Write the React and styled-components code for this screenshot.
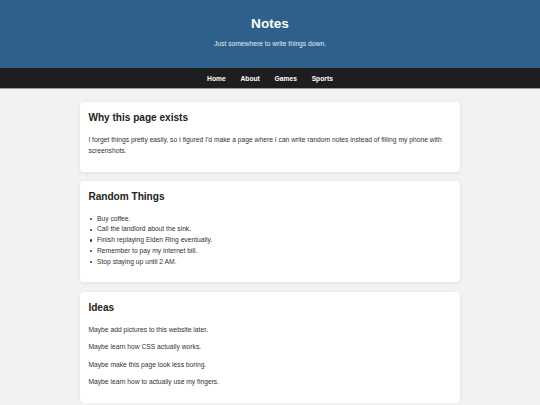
import React from "react";
import styled, { createGlobalStyle } from "styled-components";

const GlobalStyle = createGlobalStyle`
  html, body { margin: 0; padding: 0; }
  body {
    background: #f2f2f2;
    font-family: "Liberation Sans", Arial, sans-serif;
    font-size: 6.72px;
    line-height: 1.6;
    color: #333;
  }
`;

const Header = styled.header`
  background: #2f5f8b;
  color: #fff;
  text-align: center;
  padding: 15.8px 10px 18.3px;
`;

const Title = styled.h1`
  margin: 0 0 7px;
  font-size: 13.6px;
  line-height: 16px;
  font-weight: 700;
`;

const Tagline = styled.p`
  margin: 0;
  font-size: 6.72px;
  line-height: 10.75px;
  color: #e4ebf2;
`;

const Nav = styled.nav`
  background: #1e1e1e;
  height: 21.5px;
  box-sizing: border-box;
  padding-top: 3px;
  border-bottom: 1px solid #9a9a9a;
  display: flex;
  justify-content: center;
  align-items: center;
  gap: 14.7px;
`;

const NavLink = styled.a`
  color: #fff;
  font-weight: 700;
  font-size: 6.72px;
  text-decoration: none;
  line-height: 1;
`;

const Main = styled.main`
  width: 380px;
  margin: 0 auto;
  padding-top: 12.7px;
  display: flex;
  flex-direction: column;
  gap: 9.3px;
`;

const Card = styled.section`
  background: #fff;
  border-radius: 4px;
  box-shadow: 0 1px 4px rgba(0, 0, 0, 0.08);
  padding: 8.4px;
`;

const Heading = styled.h2`
  margin: 0 0 8.4px;
  font-size: 10.08px;
  line-height: 16.1px;
  font-weight: 700;
  color: #222;
`;

const Text = styled.p`
  margin: 0 0 6.72px;
`;

const List = styled.ul`
  margin: 0 0 6.72px;
  padding-left: 1.8px;
  list-style: none;
`;

const Item = styled.li`
  line-height: 10.72px;
  display: flex;
  align-items: center;

  &::before {
    content: "";
    width: 2.2px;
    height: 2.2px;
    border-radius: 50%;
    background: #333;
    margin-right: 4.6px;
    flex: none;
  }
`;

const things = [
  "Buy coffee.",
  "Call the landlord about the sink.",
  "Finish replaying Elden Ring eventually.",
  "Remember to pay my internet bill.",
  "Stop staying up until 2 AM.",
];

const ideas = [
  "Maybe add pictures to this website later.",
  "Maybe learn how CSS actually works.",
  "Maybe make this page look less boring.",
  "Maybe learn how to actually use my fingers.",
];

export default function App() {
  return (
    <>
      <GlobalStyle />
      <Header>
        <Title>Notes</Title>
        <Tagline>Just somewhere to write things down.</Tagline>
      </Header>
      <Nav>
        <NavLink href="#">Home</NavLink>
        <NavLink href="#">About</NavLink>
        <NavLink href="#">Games</NavLink>
        <NavLink href="#">Sports</NavLink>
      </Nav>
      <Main>
        <Card>
          <Heading>Why this page exists</Heading>
          <Text>
            I forget things pretty easily, so I figured I'd make a page where I can
            write random notes instead of filling my phone with screenshots.
          </Text>
        </Card>
        <Card>
          <Heading>Random Things</Heading>
          <List>
            {things.map((t) => (
              <Item key={t}>{t}</Item>
            ))}
          </List>
        </Card>
        <Card>
          <Heading>Ideas</Heading>
          {ideas.map((t) => (
            <Text key={t}>{t}</Text>
          ))}
        </Card>
      </Main>
    </>
  );
}
